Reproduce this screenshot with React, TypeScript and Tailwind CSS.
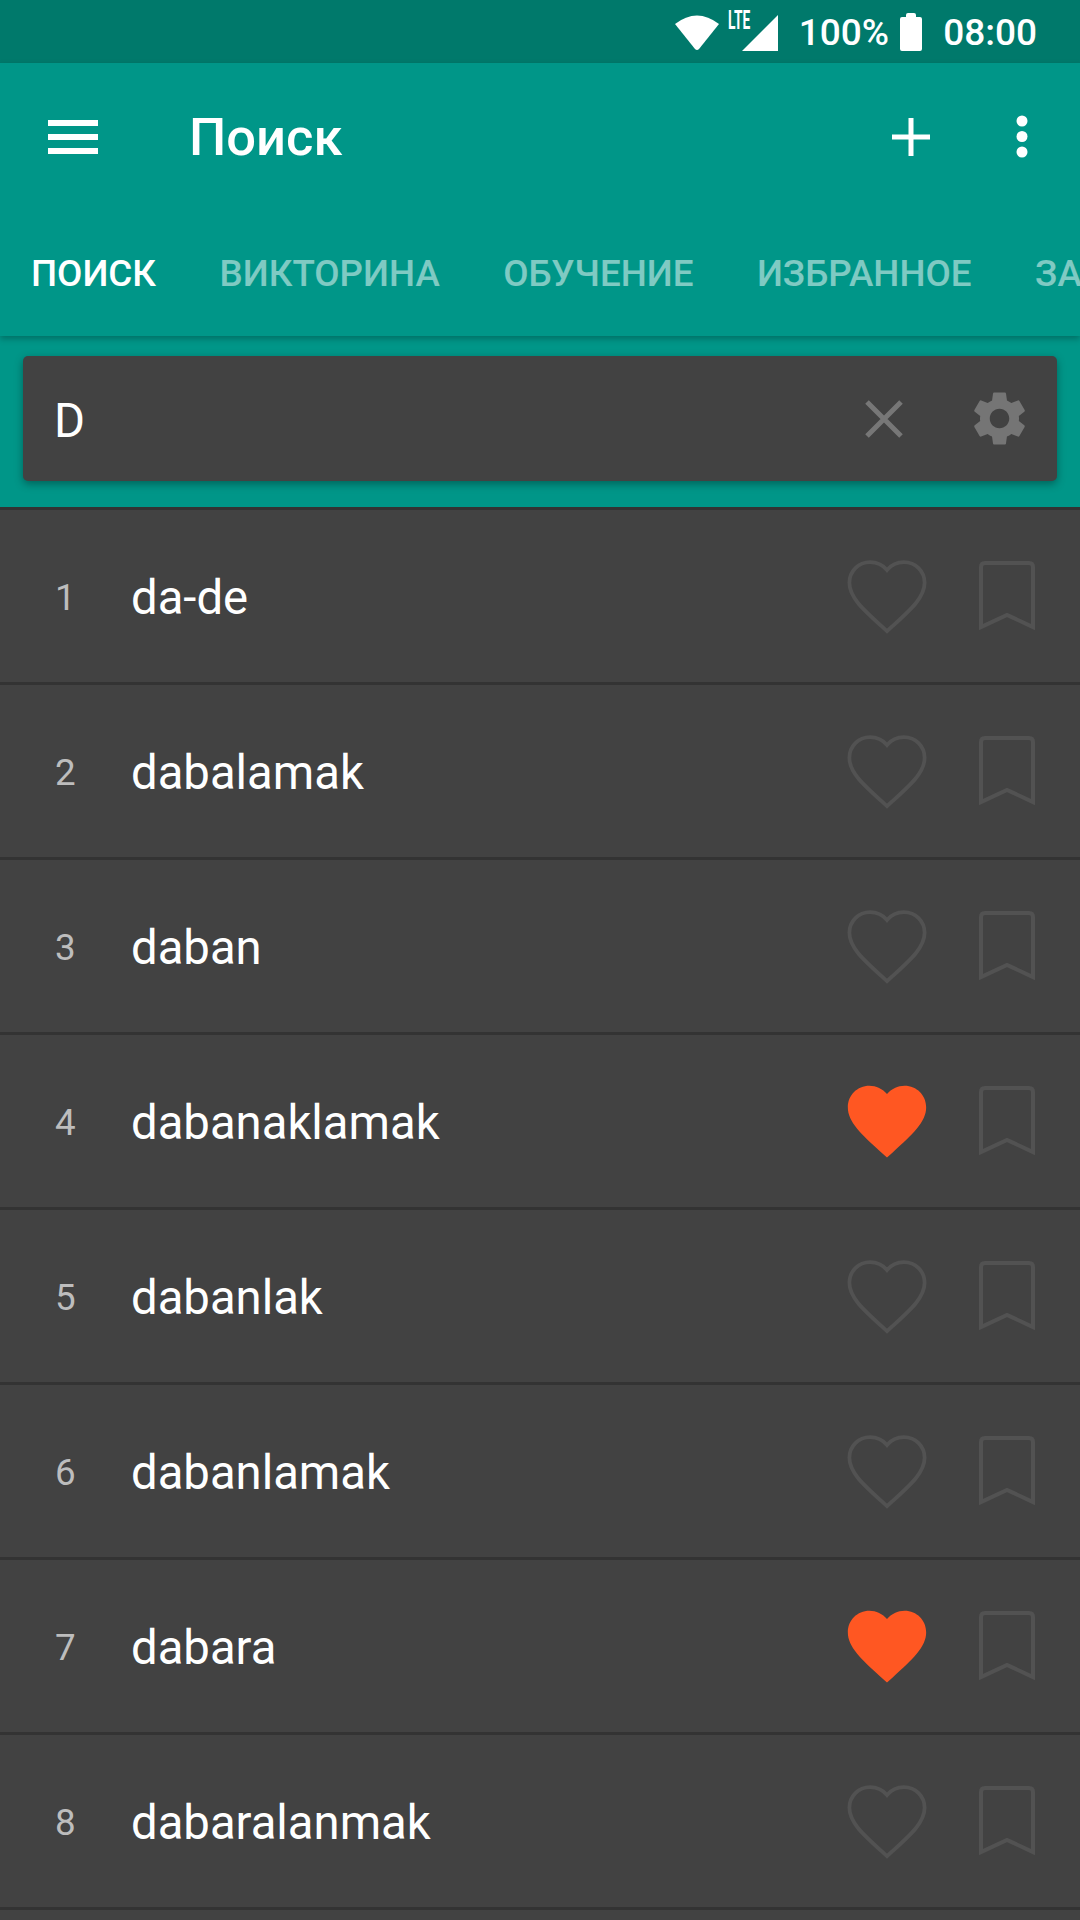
const HEART = "M12 21.35l-1.45-1.32C5.4 15.36 2 12.28 2 8.5 2 5.42 4.42 3 7.5 3c1.74 0 3.41.81 4.5 2.09C13.09 3.81 14.76 3 16.5 3 19.58 3 22 5.42 22 8.5c0 3.78-3.4 6.86-8.55 11.54L12 21.35z";
const GEAR = "M19.14 12.94c.04-.3.06-.61.06-.94 0-.32-.02-.64-.07-.94l2.03-1.58c.18-.14.23-.41.12-.61l-1.92-3.32c-.12-.22-.37-.29-.59-.22l-2.39.96c-.5-.38-1.03-.7-1.62-.94l-.36-2.54c-.04-.24-.24-.41-.48-.41h-3.84c-.24 0-.43.17-.47.41l-.36 2.54c-.59.24-1.13.57-1.62.94l-2.39-.96c-.22-.08-.47 0-.59.22L2.74 8.87c-.12.21-.08.47.12.61l2.03 1.58c-.05.3-.09.63-.09.94s.02.64.07.94l-2.03 1.58c-.18.14-.23.41-.12.61l1.92 3.32c.12.22.37.29.59.22l2.39-.96c.5.38 1.03.7 1.62.94l.36 2.54c.05.24.24.41.48.41h3.84c.24 0 .44-.17.47-.41l.36-2.54c.59-.24 1.13-.56 1.62-.94l2.39.96c.22.08.47 0 .59-.22l1.92-3.32c.12-.22.07-.47-.12-.61l-2.01-1.58zM12 15.6c-1.98 0-3.6-1.62-3.6-3.6s1.62-3.6 3.6-3.6 3.6 1.62 3.6 3.6-1.62 3.6-3.6 3.6z";

const words: [string, boolean][] = [
  ["da-de", false],
  ["dabalamak", false],
  ["daban", false],
  ["dabanaklamak", true],
  ["dabanlak", false],
  ["dabanlamak", false],
  ["dabara", true],
  ["dabaralanmak", false],
];
const tabs = ["ВИКТОРИНА", "ОБУЧЕНИЕ", "ИЗБРАННОЕ", "ЗАКЛАДКИ"];

function Row({ n, word, fav }: { n: number; word: string; fav: boolean }) {
  return (
    <div className="flex h-[175px] shrink-0 items-center border-t-[3px] border-[#333333] bg-[#424242]">
      <div className="w-[131px] shrink-0 pt-[3px] pl-[55px] text-[36.75px] text-[#bdbdbd]">{n}</div>
      <div className="flex-1 pt-[4px] text-[47.25px] text-white">{word}</div>
      <svg viewBox="0 0 24 24" className="h-[94px] w-[94px] shrink-0">
        {fav ? (
          <path d={HEART} fill="#ff5722" />
        ) : (
          <path d={HEART} fill="none" stroke="#525252" strokeWidth="1" transform="translate(12 12) scale(.96) translate(-12 -12)" />
        )}
      </svg>
      <svg viewBox="0 0 56 70" fill="none" className="mr-[45px] ml-[45px] h-[70px] w-[56px] shrink-0">
        <path d="M2 66V6Q2 2 6 2H50Q54 2 54 6V66L28 54Z" stroke="#525252" strokeWidth="4" />
      </svg>
    </div>
  );
}

export default function App() {
  return (
    <div className="flex h-[1920px] w-[1080px] flex-col overflow-hidden bg-[#424242] font-['Roboto',sans-serif]">
      <div className="flex h-[63px] shrink-0 items-center justify-end bg-[#00796b] pr-[43px] text-[37px] font-medium text-white">
        <svg viewBox="0 0 46 38" className="h-[38px] w-[46px] shrink-0">
          <path d="M1 11Q23 -6 45 11L25 36Q23 38 21 36Z" fill="white" />
        </svg>
        <div className="relative ml-[9px] h-[38px] w-[49px] shrink-0">
          <span className="absolute top-[-5px] left-[-1px] origin-left scale-x-[.55] text-[25px] leading-[26px] font-bold">LTE</span>
          <svg viewBox="0 0 36 36" className="absolute right-0 bottom-0 h-[36px] w-[36px]">
            <path d="M36 0V36H0Z" fill="white" strokeLinejoin="round" />
          </svg>
        </div>
        <span className="ml-[21px] pt-[3px]">100%</span>
        <svg viewBox="0 0 22 38" className="ml-[11px] h-[38px] w-[22px] shrink-0">
          <path d="M6 2Q6 0 8 0H14Q16 0 16 2V4H20Q22 4 22 6V36Q22 38 20 38H2Q0 38 0 36V6Q0 4 2 4H6Z" fill="white" />
        </svg>
        <span className="ml-[21px] pt-[3px]">08:00</span>
      </div>

      <div className="z-10 shrink-0 bg-[#009688] shadow-[0_3px_6px_rgba(0,0,0,0.25)]">
        <div className="flex h-[147px] items-center text-white">
          <svg viewBox="0 0 50 34" className="ml-[48px] h-[34px] w-[50px] shrink-0">
            <path d="M0 0H50V6H0ZM0 14H50V20H0ZM0 28H50V34H0Z" fill="white" />
          </svg>
          <div className="ml-[91px] flex-1 pt-[2px] text-[52.5px] font-medium">Поиск</div>
          <svg viewBox="0 0 38 38" className="h-[38px] w-[38px] shrink-0">
            <path d="M16.5 0H21.5V16.5H38V21.5H21.5V38H16.5V21.5H0V16.5H16.5Z" fill="white" />
          </svg>
          <svg viewBox="0 0 12 44" className="mr-[52px] ml-[86px] h-[44px] w-[12px] shrink-0">
            <circle cx="6" cy="6" r="5.5" fill="white" />
            <circle cx="6" cy="21.5" r="5.5" fill="white" />
            <circle cx="6" cy="37" r="5.5" fill="white" />
          </svg>
        </div>
        <div className="flex h-[126px] items-center gap-[63.5px] overflow-hidden pt-[2px] pl-[31px] text-[36.75px] font-medium whitespace-nowrap text-white/50">
          <span className="text-white">ПОИСК</span>
          {tabs.map((t) => (
            <span key={t}>{t}</span>
          ))}
        </div>
      </div>

      <div className="h-[171px] shrink-0 bg-[#009688] px-[23px] pt-[20px]">
        <div className="flex h-[125px] items-center rounded-[5px] bg-[#424242] shadow-[0_3px_8px_rgba(0,0,0,0.35)]">
          <div className="flex-1 pt-[5px] pl-[31px] text-[47.25px] text-white">D</div>
          <svg viewBox="0 0 38 38" className="h-[38px] w-[38px] shrink-0">
            <path d="M2 2L36 36M36 2L2 36" stroke="#777777" strokeWidth="5" />
          </svg>
          <svg viewBox="0 0 24 24" className="mr-[25px] ml-[64px] h-[65px] w-[65px] shrink-0">
            <path d={GEAR} fill="#757575" />
          </svg>
        </div>
      </div>

      <div className="flex flex-col">
        {words.map(([w, f], i) => (
          <Row key={w} n={i + 1} word={w} fav={f} />
        ))}
        <div className="h-[20px] border-t-[3px] border-[#333333]" />
      </div>
    </div>
  );
}
